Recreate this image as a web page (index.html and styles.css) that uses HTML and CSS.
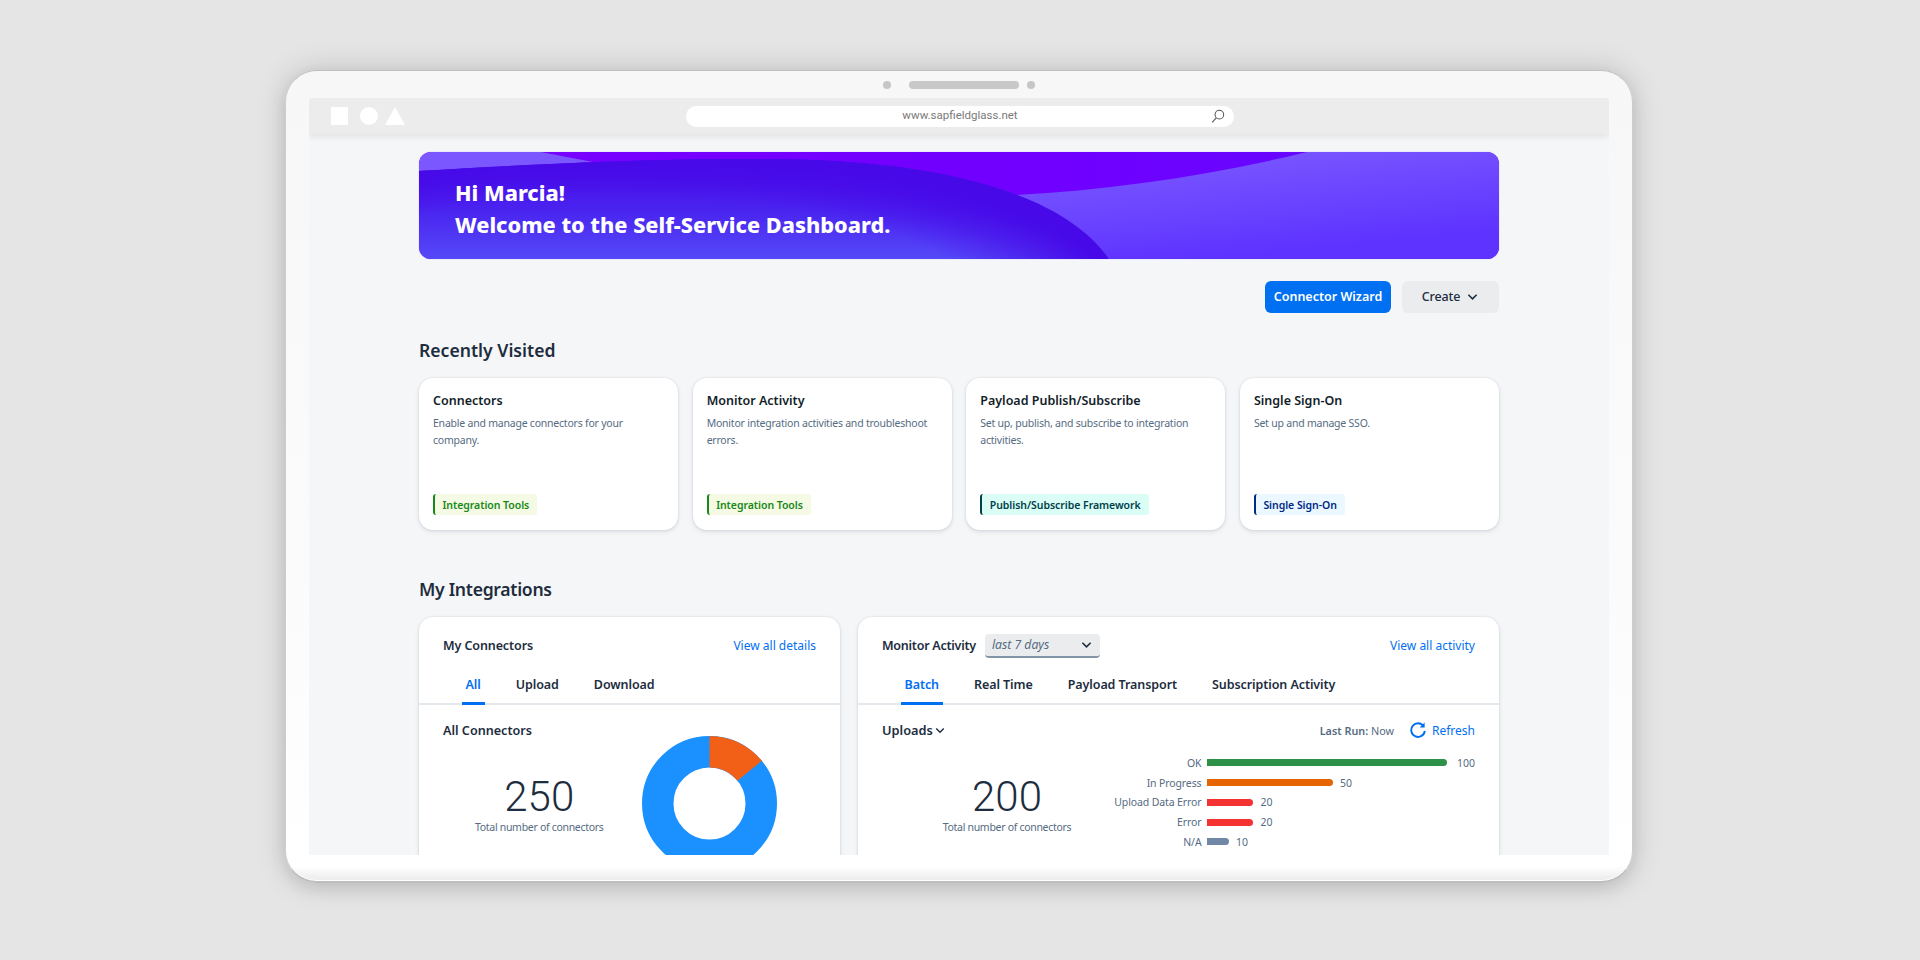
FILE: index.html
```html
<!DOCTYPE html>
<html lang="en">
<head>
<meta charset="utf-8">
<title>Self-Service Dashboard</title>
<link rel="stylesheet" href="styles.css">
</head>
<body>
<div class="device">
  <div class="sensors"><span class="dot dot-left"></span><span class="speaker"></span><span class="dot dot-right"></span></div>
  <div class="screen">
    <div class="browser">
      <div class="shapes">
        <span class="shape-square"></span>
        <span class="shape-circle"></span>
        <svg class="shape-tri" viewBox="0 0 20 18"><polygon points="10,0 20,18 0,18"/></svg>
      </div>
      <div class="url">
        <span>www.sapfieldglass.net</span>
        <svg class="url-search" viewBox="0 0 16 16"><circle cx="10" cy="6" r="4.6"/><path d="M6.7 9.4 2.3 14.3"/></svg>
      </div>
    </div>
    <main class="content">
      <section class="banner">
        <svg class="banner-art" viewBox="0 0 1080 107" preserveAspectRatio="none">
          <defs>
            <linearGradient id="gBase" x1="0" y1="0" x2="1" y2="0"><stop offset="0" stop-color="#7a00ff"/><stop offset="0.6" stop-color="#7000ff"/><stop offset="1" stop-color="#5f0cff"/></linearGradient>
            <linearGradient id="gRight" gradientUnits="userSpaceOnUse" x1="760" y1="0" x2="770" y2="107"><stop offset="0" stop-color="#7a58ff"/><stop offset="1" stop-color="#5e33ff"/></linearGradient>
            <linearGradient id="gHill" gradientUnits="userSpaceOnUse" x1="0" y1="10" x2="0" y2="107"><stop offset="0" stop-color="#4709e8"/><stop offset="0.5" stop-color="#4a24f0"/><stop offset="1" stop-color="#5549f8"/></linearGradient>
            <radialGradient id="gEdge" gradientUnits="userSpaceOnUse" cx="0" cy="0" r="1" gradientTransform="translate(200 150) scale(500 145)"><stop offset="0.72" stop-color="#4709e8" stop-opacity="0"/><stop offset="1" stop-color="#4709e8"/></radialGradient>
          </defs>
          <rect width="1080" height="107" fill="url(#gBase)"/>
          <path d="M0 0H122L174 10 0 19Z" fill="#7a57ff"/>
          <path d="M888 0C790 24 690 38 596 43L500 60 690 107H1080V0Z" fill="url(#gRight)"/>
          <path d="M0 19C150 10 250 7 330 7 500 5 640 35 690 107H0Z" fill="url(#gHill)"/>
          <path d="M0 19C150 10 250 7 330 7 500 5 640 35 690 107H0Z" fill="url(#gEdge)"/>
        </svg>
        <h1 class="banner-text">Hi Marcia!<br>Welcome to the Self-Service Dashboard.</h1>
      </section>

      <div class="actions">
        <button class="btn btn-primary">Connector Wizard</button>
        <button class="btn btn-secondary">Create
          <svg class="chev" viewBox="0 0 12 8"><path d="M1.5 1.5 6 6l4.5-4.5"/></svg>
        </button>
      </div>

      <h2 class="section-title section-first">Recently Visited</h2>
      <div class="cards">
        <article class="card">
          <h3>Connectors</h3>
          <p>Enable and manage connectors for your company.</p>
          <span class="tag tag-green">Integration Tools</span>
        </article>
        <article class="card">
          <h3>Monitor Activity</h3>
          <p>Monitor integration activities and troubleshoot errors.</p>
          <span class="tag tag-green">Integration Tools</span>
        </article>
        <article class="card">
          <h3>Payload Publish/Subscribe</h3>
          <p>Set up, publish, and subscribe to integration activities.</p>
          <span class="tag tag-teal">Publish/Subscribe Framework</span>
        </article>
        <article class="card">
          <h3>Single Sign-On</h3>
          <p>Set up and manage SSO.</p>
          <span class="tag tag-navy">Single Sign-On</span>
        </article>
      </div>

      <h2 class="section-title section-second">My Integrations</h2>
      <div class="panels">
        <section class="panel panel-left">
          <header class="panel-head">
            <span class="panel-title">My Connectors</span>
            <a class="link">View all details</a>
          </header>
          <nav class="tabs">
            <span class="tab active">All</span><span class="tab">Upload</span><span class="tab">Download</span>
          </nav>
          <div class="conn-body">
            <div class="conn-left">
              <div class="sub-title">All Connectors</div>
              <div class="metric metric-conn">
                <div class="metric-num">250</div>
                <div class="metric-label">Total number of connectors</div>
              </div>
            </div>
            <svg class="donut" viewBox="0 0 135 135">
              <circle cx="67.5" cy="67.5" r="51.75" fill="none" stroke="#1b90ff" stroke-width="31.5"/>
              <path d="M67.5 0A67.5 67.5 0 0 1 119.8 24.8L95.4 44.8A36 36 0 0 0 67.5 31.5Z" fill="#f26018"/>
            </svg>
          </div>
        </section>

        <section class="panel panel-right">
          <header class="panel-head">
            <div class="head-group">
              <span class="panel-title panel-title-tight">Monitor Activity</span>
              <div class="select"><span>last 7 days</span>
                <svg class="chev" viewBox="0 0 12 8"><path d="M1.5 1.5 6 6l4.5-4.5"/></svg>
              </div>
            </div>
            <a class="link">View all activity</a>
          </header>
          <nav class="tabs">
            <span class="tab active">Batch</span><span class="tab">Real Time</span><span class="tab">Payload Transport</span><span class="tab">Subscription Activity</span>
          </nav>
          <div class="act-body">
            <div class="toolbar">
              <div class="uploads">Uploads
                <svg class="chev chev-small" viewBox="0 0 12 8"><path d="M1.5 1.5 6 6l4.5-4.5"/></svg>
              </div>
              <div class="run">
                <span class="run-text"><b>Last Run:</b> Now</span>
                <a class="refresh">
                  <svg class="refresh-icon" viewBox="0 0 16 16"><path d="M13.6 4.2A6.8 6.8 0 1 0 14.8 8.8"/><path class="refresh-head" d="M14.6 0.4V5.4H9.6Z"/></svg>
                  Refresh
                </a>
              </div>
            </div>
            <div class="act-row">
              <div class="metric metric-act">
                <div class="metric-num">200</div>
                <div class="metric-label">Total number of connectors</div>
              </div>
              <div class="chart">
                <div class="bar-row"><span class="bar-label">OK</span><span class="bar bar-green" style="width:239.5px"></span><span class="bar-val bar-val-full">100</span></div>
                <div class="bar-row"><span class="bar-label">In Progress</span><span class="bar bar-orange" style="width:125.5px"></span><span class="bar-val">50</span></div>
                <div class="bar-row"><span class="bar-label">Upload Data Error</span><span class="bar bar-red" style="width:46px"></span><span class="bar-val">20</span></div>
                <div class="bar-row"><span class="bar-label">Error</span><span class="bar bar-red" style="width:46px"></span><span class="bar-val">20</span></div>
                <div class="bar-row"><span class="bar-label">N/A</span><span class="bar bar-grey" style="width:21.5px"></span><span class="bar-val">10</span></div>
              </div>
            </div>
          </div>
        </section>
      </div>
    </main>
  </div>
</div>
</body>
</html>
```

FILE: styles.css
```css
* { box-sizing: border-box; }
html, body { margin: 0; height: 100%; }
body {
  background: #e5e5e5;
  padding: 70px 0 0 285px;
  overflow: hidden;
  font-family: "Noto Sans", "Liberation Sans", sans-serif;
  color: #1d2d3e;
}
.device {
  width: 1348px;
  height: 813px;
  border-radius: 32px;
  padding: 0 23px;
  background: linear-gradient(#f7f7f7 0, #fbfbfb 500px, #ffffff 795px, #f4f4f4 803px, #ebebeb 810px);
  border: 1px solid #cdcdcd;
  border-top-color: #bfbfbf;
  border-bottom: 2px solid #bdbdbd;
  box-shadow: inset 0 -1px 0 #fff, 0 0 30px rgba(0,0,0,.17), 0 6px 16px rgba(0,0,0,.08);
}
.sensors {
  height: 27px;
  display: flex;
  align-items: center;
  justify-content: center;
  padding-top: 1px;
}
.dot { width: 8px; height: 8px; border-radius: 50%; background: #c6c6c6; }
.dot-left { margin-right: 18px; }
.dot-right { margin-left: 8px; }
.speaker { width: 110px; height: 8px; border-radius: 4px; background: #c8c8c8; }
.screen {
  height: 757px;
  background: #f5f6f7;
  overflow: hidden;
  border-radius: 2px 2px 0 0;
}
.browser {
  height: 36px;
  background: #ececec;
  box-shadow: 0 3px 6px rgba(0,0,0,.08);
  display: flex;
  align-items: center;
  padding: 0 21px 0 22px;
  position: relative;
}
.shapes { display: flex; align-items: center; gap: 12px; width: 355px; }
.shape-square { width: 17px; height: 18px; background: #fff; }
.shape-circle { width: 18px; height: 18px; background: #fff; border-radius: 50%; }
.shape-tri { width: 20px; height: 18px; margin-left: -5px; fill: #fff; }
.url {
  width: 548px;
  height: 21px;
  background: #fff;
  border-radius: 11px;
  display: flex;
  align-items: center;
  justify-content: center;
  font: 11.5px/1 Roboto, sans-serif;
  color: #7a7a7a;
  position: relative;
}
.url-search {
  position: absolute;
  right: 9px;
  top: 3px;
  width: 15px;
  height: 15px;
  fill: none;
  stroke: #555;
  stroke-width: 1.1;
}
.content { padding: 18px 110px 0; }
.banner {
  height: 107px;
  border-radius: 12px;
  overflow: hidden;
  position: relative;
  box-shadow: 0 0 1px rgba(90,50,255,.6);
}
.banner-art { position: absolute; inset: 0; width: 100%; height: 100%; display: block; }
.banner-text {
  position: relative;
  margin: 0;
  padding: 25px 0 0 36px;
  font-size: 21.7px;
  line-height: 32px;
  font-weight: 800;
  color: #fff;
}
.actions {
  margin-top: 22px;
  height: 32px;
  display: flex;
  justify-content: flex-end;
  gap: 11px;
}
.btn {
  border: 0;
  height: 32px;
  border-radius: 6px;
  font: 600 12.5px/1 "Noto Sans", sans-serif;
  display: flex;
  align-items: center;
  justify-content: center;
}
.btn-primary { width: 126px; background: #0070f2; color: #fff; }
.btn-secondary { width: 97px; background: #eaecee; color: #1d2d3e; font-weight: 500; gap: 7px; padding-left: 5px; letter-spacing: -0.1px; }
.chev {
  width: 11px;
  height: 8px;
  fill: none;
  stroke: #1d2d3e;
  stroke-width: 1.7;
  flex: none;
}
.section-title { margin: 0 0 16px; font-size: 17.6px; line-height: 24px; font-weight: 600; color: #1d2d3e; }
.section-first { margin-top: 25px; }
.section-second { margin-top: 47px; letter-spacing: -0.3px; }
.cards { display: grid; grid-template-columns: repeat(4, 1fr); gap: 14.5px; }
.card {
  height: 152px;
  background: #fff;
  border-radius: 14px;
  padding: 15px 14px 15px;
  box-shadow: 0 0 2px rgba(85,107,130,.2), 0 2px 4px rgba(85,107,130,.16);
  display: flex;
  flex-direction: column;
  align-items: flex-start;
}
.card h3 { margin: 0; font-size: 12.5px; line-height: 16px; font-weight: 600; color: #131e29; }
.card p { margin: 6px 0 0; font-size: 10.5px; line-height: 16.5px; letter-spacing: -0.22px; color: #556b82; }
.tag {
  margin-top: auto;
  height: 21px;
  padding: 0 8px 0 7.5px;
  font-size: 10.5px;
  font-weight: 600;
  line-height: 22px;
  letter-spacing: -0.05px;
  border-radius: 3px;
  border-left: 2px solid;
}
.tag-green { color: #188918; background: #f5fae5; border-color: #188918; }
.tag-teal { color: #02414c; background: #dafdf5; border-color: #02414c; }
.tag-navy { color: #002a86; background: #ebf8ff; border-color: #002a86; }
.panels { display: flex; gap: 18px; align-items: flex-start; }
.panel {
  height: 300px;
  background: #fff;
  border-radius: 14px;
  box-shadow: 0 0 2px rgba(85,107,130,.2), 0 2px 4px rgba(85,107,130,.16);
}
.panel-left { width: 421px; }
.panel-right { width: 641px; }
.panel-head {
  height: 58px;
  padding: 19px 24px 0;
  display: flex;
  justify-content: space-between;
  align-items: flex-start;
  font-size: 12.5px;
  line-height: 20px;
}
.head-group { display: flex; gap: 9px; align-items: flex-start; }
.panel-title { font-weight: 600; letter-spacing: -0.1px; color: #1d2d3e; }
.panel-title-tight { letter-spacing: -0.25px; }
.link { color: #0070f2; font-size: 12px; }
.select {
  width: 115px;
  height: 24px;
  margin-top: -2px;
  padding: 0 8px 0 7px;
  background: #eaecee;
  border-bottom: 2px solid #8396a8;
  border-radius: 4px;
  display: flex;
  justify-content: space-between;
  align-items: center;
  font-size: 12.2px;
  font-style: italic;
  color: #556b82;
}
.tabs {
  height: 30px;
  padding-left: 42.5px;
  display: flex;
  gap: 27px;
  border-bottom: 2px solid #e5e9ed;
}
.tab {
  height: 30px;
  padding: 0 4px;
  font-size: 12.5px;
  line-height: 20px;
  letter-spacing: -0.08px;
  font-weight: 600;
  color: #1d2d3e;
}
.tab.active { color: #0070f2; border-bottom: 3px solid #0070f2; }
.conn-body { display: flex; align-items: flex-start; padding-left: 24px; }
.conn-left { width: 198.5px; padding-top: 16px; }
.sub-title { font-size: 12.6px; line-height: 20px; font-weight: 600; }
.metric { margin-top: 35px; text-align: center; }
.metric-conn { margin-top: 34px; padding-right: 6px; }
.metric-num { font: 300 42px/44px Roboto, sans-serif; color: #1d2d3e; }
.metric-label { font-size: 10.5px; line-height: 16px; letter-spacing: -0.3px; color: #556b82; white-space: nowrap; }
.donut { width: 135px; height: 135px; margin-top: 30.5px; flex: none; }
.act-body { padding: 15px 24px 0; }
.toolbar { height: 20px; display: flex; justify-content: space-between; align-items: center; }
.uploads { display: flex; align-items: center; gap: 2px; font-size: 12.8px; font-weight: 600; }
.chev-small { width: 10px; height: 7px; }
.run { display: flex; align-items: center; gap: 16px; }
.run-text { font-size: 10.8px; color: #556b82; }
.run-text b { font-weight: 600; }
.refresh { display: flex; align-items: center; gap: 6px; color: #0070f2; font-size: 12px; }
.refresh-icon { width: 16px; height: 16px; fill: none; stroke: #0070f2; stroke-width: 1.9; }
.refresh-head { fill: #0070f2; stroke: none; }
.act-row { display: flex; align-items: flex-start; }
.metric-act { width: 210px; margin-left: 20px; flex: none; }
.chart { margin-top: 13px; }
.bar-row { height: 19.75px; display: flex; align-items: center; font-size: 10.5px; color: #556b82; }
.bar-label { width: 89.5px; margin-right: 5.5px; text-align: right; white-space: nowrap; letter-spacing: -0.12px; flex: none; }
.bar { height: 7px; border-radius: 0 4px 4px 0; flex: none; }
.bar-green { background: #2e9148; }
.bar-orange { background: #e76500; }
.bar-red { background: #f53232; }
.bar-grey { background: #7088a5; }
.bar-val { margin-left: 7.5px; }
.bar-val-full { margin-left: 10.5px; }
```
